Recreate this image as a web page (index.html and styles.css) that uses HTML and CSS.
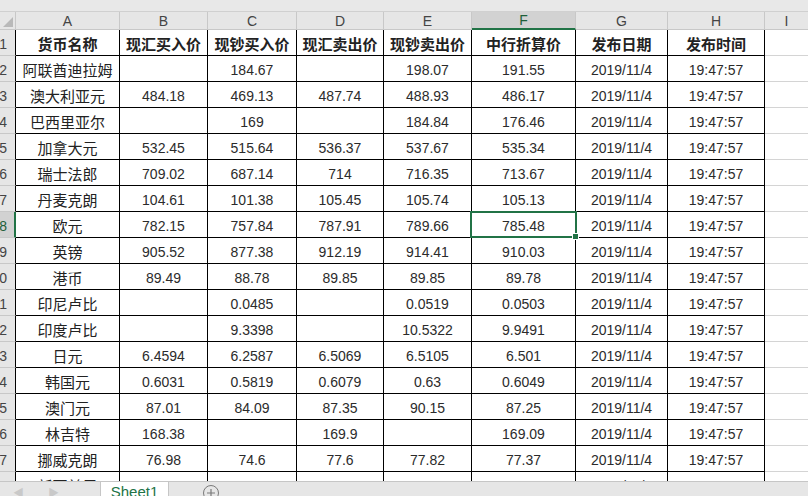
FILE: index.html
```html
<!DOCTYPE html>
<html lang="zh">
<head>
<meta charset="utf-8">
<link rel="stylesheet" href="styles.css">
</head>
<body>
<div class="app">
  <div class="topstrip"></div>
  <div class="sheet" id="sheet">
    <div class="corner"><span class="tri"></span></div>
    <div class="ch">A</div><div class="ch">B</div><div class="ch">C</div><div class="ch">D</div><div class="ch">E</div><div class="ch ch-sel">F</div><div class="ch">G</div><div class="ch">H</div><div class="ch ch-last">I</div>
  </div>
  <div class="tabbar">
    <div class="nav"><span class="arrow">&#9664;</span><span class="arrow">&#9654;</span></div>
    <div class="tab">Sheet1</div>
    <div class="add"><svg width="18" height="18" viewBox="0 0 18 18"><circle cx="9" cy="9" r="7.5" fill="none" stroke="#7a7a7a" stroke-width="1"/><path d="M9 5v8M5 9h8" stroke="#7a7a7a" stroke-width="1.2"/></svg></div>
  </div>
</div>
<script src="app.js"></script>
</body>
</html>
```

FILE: app.js
```js
var rows = [
  ["货币名称","现汇买入价","现钞买入价","现汇卖出价","现钞卖出价","中行折算价","发布日期","发布时间"],
  ["阿联酋迪拉姆","","184.67","","198.07","191.55"],
  ["澳大利亚元","484.18","469.13","487.74","488.93","486.17"],
  ["巴西里亚尔","","169","","184.84","176.46"],
  ["加拿大元","532.45","515.64","536.37","537.67","535.34"],
  ["瑞士法郎","709.02","687.14","714","716.35","713.67"],
  ["丹麦克朗","104.61","101.38","105.45","105.74","105.13"],
  ["欧元","782.15","757.84","787.91","789.66","785.48"],
  ["英镑","905.52","877.38","912.19","914.41","910.03"],
  ["港币","89.49","88.78","89.85","89.85","89.78"],
  ["印尼卢比","","0.0485","","0.0519","0.0503"],
  ["印度卢比","","9.3398","","10.5322","9.9491"],
  ["日元","6.4594","6.2587","6.5069","6.5105","6.501"],
  ["韩国元","0.6031","0.5819","0.6079","0.63","0.6049"],
  ["澳门元","87.01","84.09","87.35","90.15","87.25"],
  ["林吉特","168.38","","169.9","","169.09"],
  ["挪威克朗","76.98","74.6","77.6","77.82","77.37"],
  ["新西兰元","450.63","436.38","454.04","458.91","452.42"]
];
var sheet = document.getElementById("sheet");
rows.forEach(function (r, i) {
  var n = i + 1;
  var rh = document.createElement("div");
  rh.className = "rh" + (n === 8 ? " rh-sel" : "");
  var s = document.createElement("span");
  s.textContent = n;
  rh.appendChild(s);
  sheet.appendChild(rh);
  var vals = r.slice();
  if (i > 0) { vals.push("2019/11/4"); vals.push("19:47:57"); }
  for (var c = 0; c < 8; c++) {
    var d = document.createElement("div");
    d.className = "cell" + (i === 0 ? " hdr" : "") + (c === 0 && i > 0 ? " name" : "");
    d.textContent = vals[c] || "";
    if (n === 8 && c === 5) {
      d.className += " active";
      var sel = document.createElement("div");
      sel.className = "sel";
      var h = document.createElement("div");
      h.className = "handle";
      sel.appendChild(h);
      d.appendChild(sel);
    }
    sheet.appendChild(d);
  }
  var e = document.createElement("div");
  e.className = "empty";
  sheet.appendChild(e);
});
```

FILE: styles.css
```css
html, body {
  margin: 0;
  padding: 0;
  width: 808px;
  height: 496px;
  overflow: hidden;
  background: #fff;
}
.app {
  width: 808px;
  height: 496px;
  display: flex;
  flex-direction: column;
  font-family: "Liberation Sans", "Noto Sans CJK SC", sans-serif;
  color: #2b2b2b;
}
.topstrip {
  height: 11px;
  flex: none;
  background: #e8e8e8;
  border-bottom: 1px solid #d0d0d0;
}
.sheet {
  flex: 1;
  min-height: 0;
  overflow: hidden;
  display: grid;
  grid-template-columns: 16px 104px 88px 89px 87px 88px 104px 92px 97px 1fr;
  grid-auto-rows: 26px;
  grid-template-rows: 18px;
}
.corner {
  background: #e6e6e6;
  border-right: 1px solid #c8c8c8;
  border-bottom: 1px solid #c8c8c8;
  position: relative;
}
.tri {
  position: absolute;
  right: 2px;
  bottom: 2px;
  width: 0;
  height: 0;
  border-left: 10px solid transparent;
  border-bottom: 10px solid #b9b9b9;
}
.ch {
  background: #e6e6e6;
  border-right: 1px solid #c8c8c8;
  border-bottom: 1px solid #c8c8c8;
  display: flex;
  align-items: center;
  justify-content: center;
  font-size: 14px;
  color: #444;
}
.ch-last { border-right: none; }
.ch-sel {
  background: #d2d2d2;
  border-bottom: 2px solid #217346;
  color: #1e5f3a;
}
.rh {
  background: #e6e6e6;
  border-right: 1px solid #000;
  border-bottom: 1px solid #c8c8c8;
  display: flex;
  align-items: center;
  justify-content: flex-end;
  padding-right: 8px;
  overflow: hidden;
  white-space: nowrap;
  font-size: 14px;
  color: #444;
  padding-top: 3px;
}
.rh-sel {
  background: #d2d2d2;
  color: #1e5f3a;
  border-right: 2px solid #217346;
  padding-right: 7px;
}
.cell {
  border-right: 1px solid #000;
  border-bottom: 1px solid #000;
  display: flex;
  align-items: center;
  justify-content: center;
  white-space: nowrap;
  overflow: visible;
  font-size: 14px;
  color: #2b2b2b;
  padding-top: 2px;
}
.cell.hdr, .cell.name {
  font-size: 15px;
  color: #222;
}
.cell.hdr {
  font-weight: bold;
}
.active {
  position: relative;
}
.sel {
  position: absolute;
  left: -2px;
  top: -1px;
  right: -2px;
  bottom: -1px;
  border: 2px solid #217346;
  pointer-events: none;
}
.handle {
  position: absolute;
  right: -4px;
  bottom: -4px;
  width: 5px;
  height: 5px;
  background: #217346;
  border: 1px solid #fff;
}
.empty {
  border-bottom: 1px solid #d4d4d4;
}
.tabbar {
  height: 14px;
  flex: none;
  background: #e6e6e6;
  border-top: 1px solid #c6c6c6;
  display: flex;
  align-items: flex-start;
  font-size: 14px;
  overflow: hidden;
}
.nav {
  width: 87px;
  display: flex;
  gap: 24px;
  padding-left: 13px;
  color: #c9c9c9;
  font-size: 11px;
  line-height: 22px;
}
.tab {
  width: 67px;
  height: 15px;
  background: #fff;
  color: #217346;
  text-align: center;
  line-height: 22px;
  font-size: 15px;
  border-left: 1px solid #c6c6c6;
  border-right: 1px solid #c6c6c6;
  margin-top: -1px;
}
.add {
  padding-left: 33px;
  padding-top: 2px;
  height: 12px;
  overflow: hidden;
}
```
